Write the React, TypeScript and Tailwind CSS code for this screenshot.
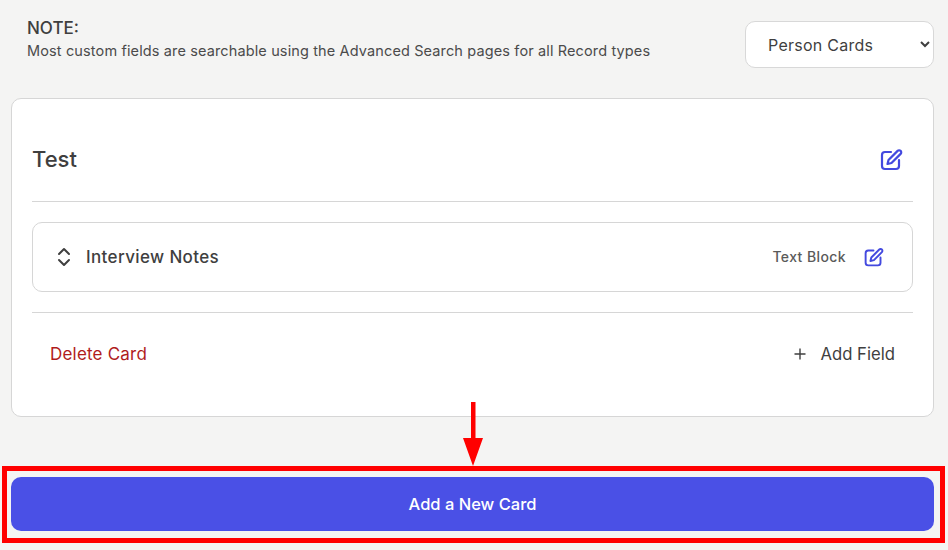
import React from "react";

function EditIcon({ size, className }: { size: number; className?: string }) {
  return (
    <svg className={className} width={size} height={size} viewBox="0 0 24 24" fill="none" stroke="#4349df" strokeWidth={2.2} strokeLinecap="round" strokeLinejoin="round">
      <path d="M12 4H6a3 3 0 0 0-3 3v11a3 3 0 0 0 3 3h11a3 3 0 0 0 3-3v-6" />
      <path d="M18.6 2.9a2.1 2.1 0 0 1 3 3L12.5 15l-4 1 1-4z" />
    </svg>
  );
}

export default function App() {
  return (
    <div className="relative h-[550px] w-[948px] overflow-hidden bg-[#f4f4f3] pl-[11px] pr-[14px] font-['Inter',sans-serif] text-[#3f3f3f]">
      <div className="flex h-[98px] items-start justify-between">
        <div className="pl-4 pt-[18px]">
          <div className="text-[17px] font-medium leading-[20px]">NOTE:</div>
          <div className="mt-[3px] text-[14.5px] leading-[20px] tracking-[0.13px] text-[#4b4b4b]">
            Most custom fields are searchable using the Advanced Search pages for all Record types
          </div>
        </div>
        <select className="mt-[21px] h-[47px] w-[189px] rounded-[10px] border border-[#d8d8d8] bg-white pl-[18px] pr-1 text-[16px] tracking-[0.25px] text-[#3f3f3f]">
          <option>Person Cards</option>
        </select>
      </div>

      <div className="h-[319px] rounded-[10px] border border-[#d6d6d6] bg-white px-5">
        <div className="flex h-[103px] items-center justify-between border-b border-[#d6d6d6] pr-[10px] pt-[18px]">
          <h2 className="text-[22px] font-medium">Test</h2>
          <EditIcon size={24} className="mt-[2px]" />
        </div>
        <div className="mt-5 flex h-[70px] items-center justify-between rounded-[10px] border border-[#d6d6d6] pl-[22px] pr-[28px]">
          <div className="flex items-center gap-3">
            <svg width="18" height="20" viewBox="0 0 18 20" fill="none" stroke="#3f3f3f" strokeWidth={2} strokeLinecap="round" strokeLinejoin="round">
              <path d="M4 7l5-5 5 5" />
              <path d="M4 13l5 5 5-5" />
            </svg>
            <span className="ml-px pt-[2px] text-[17px] font-medium tracking-[0.37px]">Interview Notes</span>
          </div>
          <div className="flex items-center gap-[17px]">
            <span className="mb-[1px] text-[14px] font-medium tracking-[0.4px] text-[#5a5a5a]">Text Block</span>
            <EditIcon size={21} />
          </div>
        </div>
        <div className="mt-5 flex h-[84px] items-center justify-between border-t border-[#d6d6d6] pl-[18px] pr-[18px]">
          <button className="text-[17px] tracking-[0.2px] text-[#b01c1c]">Delete Card</button>
          <button className="flex items-center gap-[13px] text-[16.7px]">
            <svg width="14" height="14" viewBox="0 0 14 14" fill="none" stroke="#3f3f3f" strokeWidth={1.4}>
              <path d="M7 1.5v11M1.5 7h11" />
            </svg>
            Add Field
          </button>
        </div>
      </div>

      <button className="mt-[60px] block h-[54px] w-[923px] rounded-[10px] bg-[#4a50e6] text-[16.5px] font-medium text-white">
        Add a New Card
      </button>

      <div className="absolute left-[2px] top-[466px] h-[77px] w-[943px] border-[5px] border-[#ff0000]" />
      <svg className="absolute left-[463px] top-[402px]" width="20" height="64" viewBox="0 0 20 64">
        <path d="M8 0h4.5v36H20L10 64 0 36H8z" fill="#ff0000" />
      </svg>
    </div>
  );
}
